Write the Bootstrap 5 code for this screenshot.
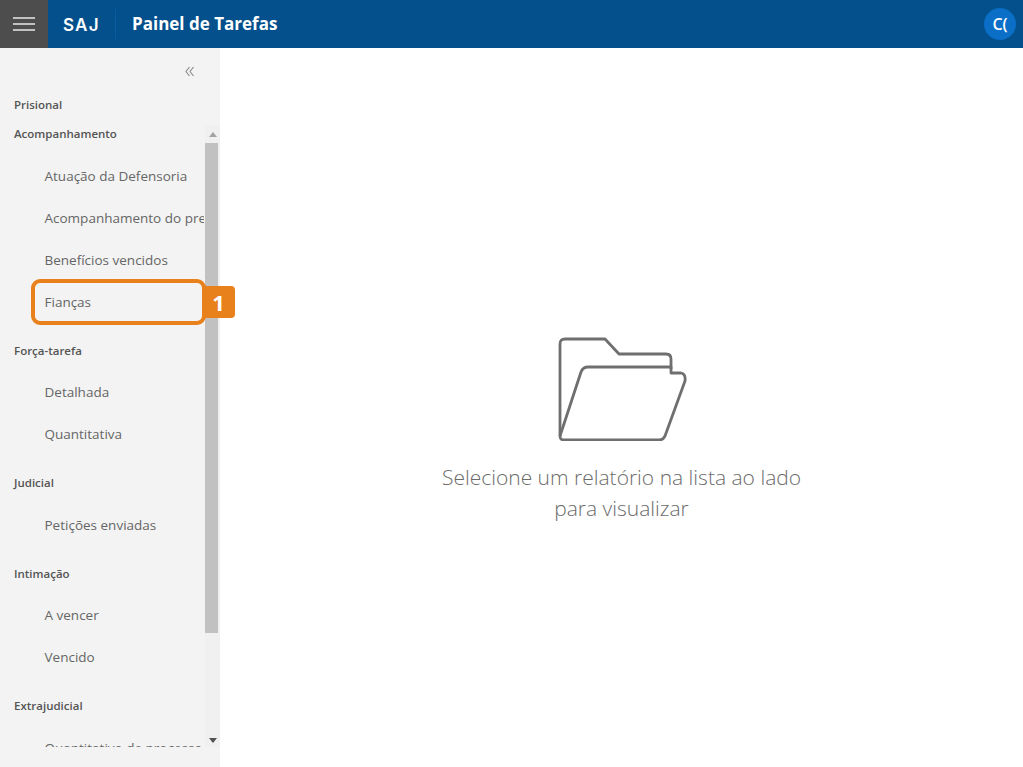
<!DOCTYPE html>
<html lang="pt-BR">
<head>
<meta charset="utf-8">
<title>Painel de Tarefas</title>
<link href="https://cdn.jsdelivr.net/npm/bootstrap@5.3.0/dist/css/bootstrap.min.css" rel="stylesheet">
<style>
html,body{height:100%;overflow:hidden}
body{font-family:"Open Sans","Noto Sans",sans-serif;background:#fff;color:#555}
.topbar{height:48px;background:#04508c;color:#fff}
.burger{width:48px;height:48px;background:#4d4d4d}
.brand{font-family:Inter,"Open Sans",sans-serif;font-size:17px;font-weight:600;margin-left:15px;width:53px;line-height:32px;border-right:1px solid #0b5d9f;height:30px;letter-spacing:1.200px}
.title{font-size:17px;font-weight:700;margin-left:16px}
.avatar{width:32px;height:32px;border-radius:50%;background:#0b6fc7;font-size:16px;font-weight:600;margin-right:7px}
.shell{height:719px}
.side{width:220px;background:#f3f3f3;position:relative}
.collapse-row{height:48px;padding-right:25px;padding-top:18px}
.group-fixed,.group-title{font-size:11.5px;font-weight:600;color:#555;line-height:16px;padding-left:14px}
.group-fixed{height:30px;padding-top:1px}
.scroller{height:621px;overflow:hidden}
.scroll-body{width:205px;overflow:hidden;flex:none}
.group-title{height:16px;margin-bottom:12.4px}
.entry{font-size:13.5px;color:#666;line-height:18px;padding:12px 0 12px 44.5px;height:42px;white-space:nowrap;overflow:hidden;width:204px}
.group-title.gap-first{margin-top:0;margin-bottom:13px}
.group-title.after{margin-top:20px}
.track{width:15px;background:#f0f0f0;flex:none}
.arrow-box{height:17px;width:15px}
.arrow-down{height:13px}
.thumb{height:490px;width:13px;background:#c1c1c1}
.callout{position:absolute;left:31px;top:231px;width:175px;height:46px;border:4.500px solid #e8801c;border-radius:9px}
.callout-num{position:absolute;left:205px;top:238px;width:30px;height:32px;background:#e8801c;color:#fff;font-weight:700;font-size:22px;border-radius:0 4px 4px 0;line-height:32px;padding-right:3px;text-align:center}
.empty-wrap{padding-top:288px}
.msg{font-size:21px;font-weight:300;line-height:31px;color:#6b6b6b;text-align:center;margin-top:21px}
</style>
</head>
<body>
<header class="topbar d-flex align-items-center">
  <div class="burger d-flex align-items-center justify-content-center">
    <svg width="22" height="14" viewBox="0 0 22 14"><path d="M0 1h22M0 7h22M0 13h22" stroke="#e8e8e8" stroke-width="1.5" fill="none"/></svg>
  </div>
  <div class="brand">SAJ</div>
  <div class="title">Painel de Tarefas</div>
  <div class="avatar ms-auto d-flex align-items-center justify-content-center">C(</div>
</header>
<div class="shell d-flex">
  <aside class="side d-flex flex-column">
    <div class="collapse-row d-flex justify-content-end">
      <svg width="10" height="11" viewBox="0 0 10 11"><path d="M4.500 1 1 5.500 4.500 10M8.500 1 5 5.500 8.500 10" stroke="#888" stroke-width="1.100" fill="none"/></svg>
    </div>
    <div class="group-fixed">Prisional</div>
    <div class="scroller d-flex">
      <div class="scroll-body">
        <div class="group-title gap-first">Acompanhamento</div>
        <div class="entry">Atuação da Defensoria</div>
        <div class="entry">Acompanhamento do preso</div>
        <div class="entry">Benefícios vencidos</div>
        <div class="entry">Fianças</div>
        <div class="group-title after">Força-tarefa</div>
        <div class="entry">Detalhada</div>
        <div class="entry">Quantitativa</div>
        <div class="group-title after">Judicial</div>
        <div class="entry">Petições enviadas</div>
        <div class="group-title after">Intimação</div>
        <div class="entry">A vencer</div>
        <div class="entry">Vencido</div>
        <div class="group-title after">Extrajudicial</div>
        <div class="entry">Quantitativo de processo</div>
      </div>
      <div class="track d-flex flex-column">
        <div class="arrow-box d-flex align-items-center justify-content-center">
          <svg width="8" height="5" viewBox="0 0 8 5"><path d="M4 0 8 5H0z" fill="#a3a3a3"/></svg>
        </div>
        <div class="thumb"></div>
        <div class="flex-grow-1"></div>
        <div class="arrow-box arrow-down d-flex align-items-center justify-content-center">
          <svg width="8" height="5" viewBox="0 0 8 5"><path d="M0 0h8L4 5z" fill="#505050"/></svg>
        </div>
      </div>
    </div>
    <div class="callout"></div>
    <div class="callout-num">1</div>
  </aside>
  <main class="flex-grow-1">
    <div class="empty-wrap d-flex flex-column align-items-center">
      <svg width="130" height="105" viewBox="0 0 130 105" fill="none" stroke="#6f6f6f" stroke-width="2.800" stroke-linejoin="round">
        <path d="M3 100V8q0-5 5-5h40l14 15h47q5 0 5 5v10"/>
        <path d="M3 100 24 36q2-5 7-5h83v6h10q5 1 4 8l-20 55q-2 4-6 4H7q-4 0-4-4z"/>
      </svg>
      <div class="msg">Selecione um relatório na lista ao lado<br>para visualizar</div>
    </div>
  </main>
</div>
<script src="https://cdn.jsdelivr.net/npm/bootstrap@5.3.0/dist/js/bootstrap.bundle.min.js"></script>
</body>
</html>
